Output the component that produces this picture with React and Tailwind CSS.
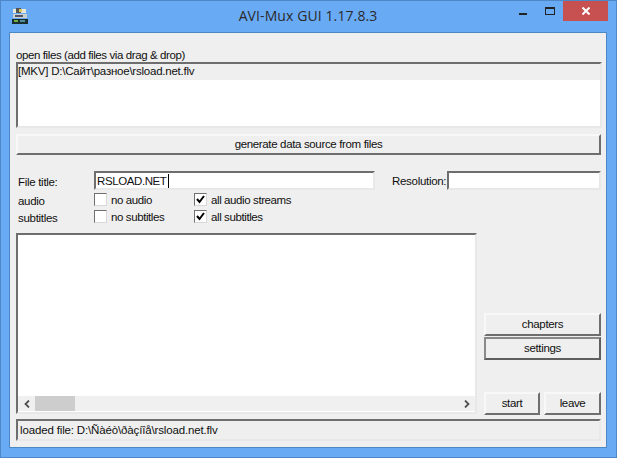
import React from 'react';

const sunken = 'border-2 border-t-[#6e6e6e] border-l-[#6e6e6e] border-b-[#e8e8e8] border-r-[#e8e8e8]';
const raised = 'border-2 border-t-[#f8f8f8] border-l-[#f8f8f8] border-b-[#6e6e6e] border-r-[#6e6e6e] bg-[#efefef] flex items-center justify-center pb-[1px] text-[#101010] tracking-[-0.35px]';
const defaultBtn = 'border-2 border-t-[#8a8a8a] border-l-[#8a8a8a] border-b-[#5e5e5e] border-r-[#5e5e5e] bg-[#efefef] flex items-center justify-center pb-[1px] text-[#101010] tracking-[-0.35px]';

const Check = ({ checked, label, className }) => (
  <div className={`flex items-center gap-[4px] h-[15px] ${className}`}>
    <div className="w-[13px] h-[13px] bg-white border border-t-[#707070] border-l-[#707070] border-b-[#d8d8d8] border-r-[#d8d8d8] flex items-center justify-center shrink-0">
      {checked && (
        <svg width="9" height="9" viewBox="0 0 9 9">
          <path d="M1 4 L3.5 7 L8 1" fill="none" stroke="#000" strokeWidth="2" />
        </svg>
      )}
    </div>
    <span className="tracking-[-0.4px]">{label}</span>
  </div>
);

const AppIcon = () => (
  <svg width="16" height="16" viewBox="0 0 16 16" className="mt-[8px] ml-[12px]">
    <rect x="0" y="0" width="16" height="16" fill="#69aaf5" />
    <rect x="1" y="1" width="13" height="4" fill="#e8e8d8" />
    <rect x="4" y="0" width="5" height="5" fill="#555" />
    <rect x="7" y="1" width="3" height="3" fill="#d8c860" />
    <rect x="1" y="6" width="14" height="4" fill="#c8d0d0" />
    <rect x="3" y="7" width="8" height="2" fill="#556" />
    <rect x="0" y="11" width="16" height="5" fill="#1a3030" />
    <rect x="2" y="12" width="4" height="2" fill="#70b040" />
    <rect x="8" y="12" width="5" height="2" fill="#5090a0" />
  </svg>
);

export default function App() {
  return (
    <div className="w-[617px] h-[458px] bg-[#69aaf5] border border-[#4f86c6] flex flex-col overflow-hidden font-['Liberation_Sans',Arial,sans-serif] text-[11.5px] leading-[14px] text-[#101010]">
      {/* title bar */}
      <div className="h-[31px] flex shrink-0">
        <div className="w-[200px] -mt-[1px] -ml-[1px]"><AppIcon /></div>
        <div className="flex-1 text-center pt-[5px] font-['Open_Sans',sans-serif] text-[14px] tracking-[0.1px] leading-[20px] text-[#2b2b2b]">AVI-Mux GUI 1.17.8.3</div>
        <div className="w-[200px] flex justify-end items-start pr-[8px]">
          <div className="w-[28px] h-[20px] flex justify-center">
            <div className="w-[8px] h-[2px] bg-[#222] mt-[12px]" />
          </div>
          <div className="w-[26px] h-[20px] flex justify-center">
            <div className="w-[10px] h-[8px] border border-t-[2px] border-[#222] mt-[6px]" />
          </div>
          <div className="w-[45px] h-[20px] bg-[#c75050] flex items-center justify-center">
            <svg width="8" height="8" viewBox="0 0 8 8"><path d="M0.5 0.5 L7.5 7.5 M7.5 0.5 L0.5 7.5" stroke="#fff" strokeWidth="2" /></svg>
          </div>
        </div>
      </div>

      {/* client area */}
      <div className="w-[598px] h-[416px] ml-[8px] border border-[#4f86c6] bg-[#efefef] px-[6px] flex flex-col">
        <div className="mt-[15px] h-[14px] tracking-[-0.4px]">open files (add files via drag &amp; drop)</div>
        <div className={`${sunken} bg-white h-[66px] w-[586px]`}>
          <div className="bg-[#efefef] h-[16px] leading-[15px] tracking-[-0.23px]">[MKV] D:\Сайт\разное\rsload.net.flv</div>
        </div>
        <div className={`${raised} h-[21px] w-[585px] mt-[6px] tracking-[-0.4px]`}>generate data source from files</div>

        <div className="flex items-center mt-[16px] h-[19px] w-[585px]">
          <span className="w-[78px] pl-[2px] pt-[3px] tracking-[-0.3px]">File title:</span>
          <div className={`${sunken} bg-white w-[281px] h-[19px] pl-[1px] flex items-center tracking-[-0.4px]`}>
            RSLOAD.NET<div className="w-[1px] h-[14px] bg-black ml-[1px]" />
          </div>
          <span className="ml-[17px] tracking-[-0.3px]">Resolution:</span>
          <div className={`${sunken} bg-white w-[154px] h-[19px] ml-auto`} />
        </div>

        <div className="flex mt-[2px] h-[15px] items-center">
          <span className="w-[78px] pl-[2px] pt-[3px] tracking-[-0.3px]">audio</span>
          <Check label="no audio" className="w-[100px]" />
          <Check checked label="all audio streams" />
        </div>
        <div className="flex mt-[2px] h-[15px] items-center">
          <span className="w-[78px] pl-[2px] pt-[3px] tracking-[-0.3px]">subtitles</span>
          <Check label="no subtitles" className="w-[100px]" />
          <Check checked label="all subtitles" />
        </div>

        <div className="flex mt-[9px] w-[586px]">
          <div className={`${sunken} bg-white w-[461px] h-[181px] flex flex-col justify-end`}>
            <div className="h-[15px] mb-[1px] bg-[#f0f0f0] flex items-center">
              <div className="w-[17px] flex justify-center">
                <svg width="6" height="8" viewBox="0 0 6 8"><path d="M5 0.5 L1.5 4 L5 7.5" fill="none" stroke="#505050" strokeWidth="1.8" /></svg>
              </div>
              <div className="w-[40px] h-[15px] bg-[#cdcdcd]" />
              <div className="flex-1" />
              <div className="w-[17px] flex justify-center">
                <svg width="6" height="8" viewBox="0 0 6 8"><path d="M1 0.5 L4.5 4 L1 7.5" fill="none" stroke="#505050" strokeWidth="1.8" /></svg>
              </div>
            </div>
          </div>
          <div className="flex-1 flex flex-col pl-[7px] pt-[80px]">
            <div className={`${raised} h-[23px] w-[117px]`}>chapters</div>
            <div className={`${defaultBtn} h-[23px] w-[117px] mt-[1px]`}>settings</div>
            <div className="flex mt-[32px] justify-between w-[117px]">
              <div className={`${raised} w-[56px] h-[23px]`}>start</div>
              <div className={`${raised} w-[57px] h-[23px]`}>leave</div>
            </div>
          </div>
        </div>

        <div className={`${sunken} w-[585px] h-[22px] mt-[4px] flex items-center pl-[2px] tracking-[-0.15px]`}>loaded file: D:\Ñàéò\ðàçíîå\rsload.net.flv</div>
      </div>
    </div>
  );
}
